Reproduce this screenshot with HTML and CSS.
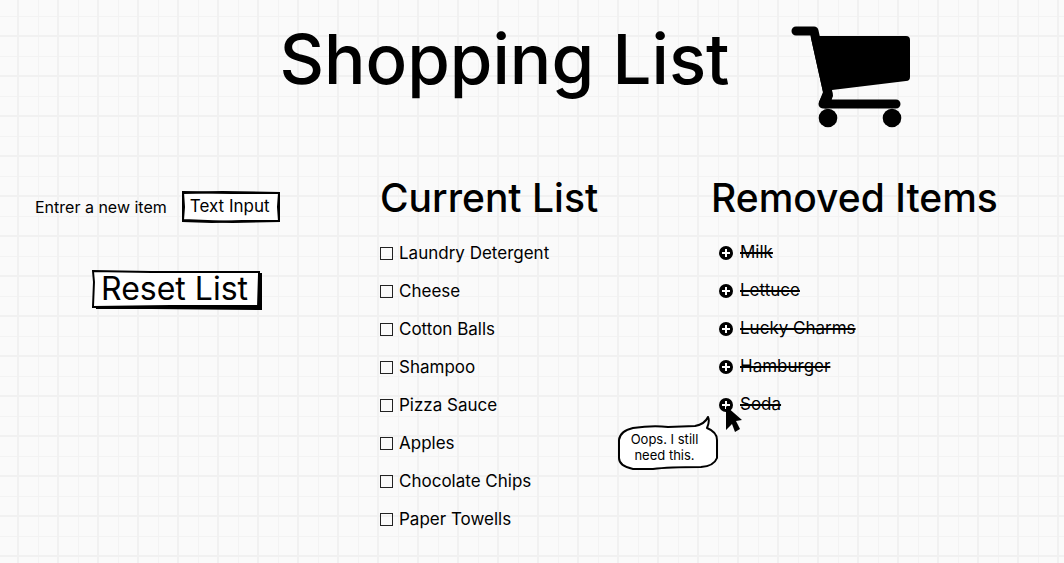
FILE: index.html
```html
<!DOCTYPE html>
<html lang="en">
<head>
<meta charset="utf-8">
<meta name="viewport" content="width=device-width, initial-scale=1">
<title>Shopping List</title>
<link rel="stylesheet" href="styles.css">
</head>
<body>
<svg class="defs" aria-hidden="true">
  <symbol id="plus" viewBox="0 0 14 14">
    <circle cx="7" cy="7" r="7" fill="#000"/>
    <path d="M7 3V11M3 7H11" stroke="#fff" stroke-width="2"/>
  </symbol>
</svg>
<header class="header">
  <h1 class="title">Shopping List</h1>
  <svg class="cart" viewBox="0 0 120 102" aria-hidden="true">
    <path d="M5 5H23L37 68L35 78" fill="none" stroke="#000" stroke-width="9" stroke-linecap="round" stroke-linejoin="round"/>
    <path d="M26 10H115Q119 10 119 14V51Q119 55 115 55L41 64L42 70L38 80L28 76L32 66L20 12Z"/>
    <path d="M35 72L32 78H105" fill="none" stroke="#000" stroke-width="9" stroke-linecap="round" stroke-linejoin="round"/>
    <circle cx="37" cy="92" r="9.3"/>
    <circle cx="101" cy="92" r="9.3"/>
  </svg>
</header>
<main class="columns">
  <section class="controls">
    <div class="field">
      <label class="label" for="item">Entrer a new item</label>
      <span class="sketch input-box">
        <svg class="outline" viewBox="0 0 98 32" preserveAspectRatio="none" aria-hidden="true">
          <path d="M1 1L50 2L97 2L96 16L97 30L50 31L1 29L2 16Z" fill="#fff" stroke="#000" stroke-width="2"/>
          <path d="M1 2L40 1L97 2L97 30L60 30L30 31L1 30L1 16Z" fill="none" stroke="#000" stroke-width="2"/>
        </svg>
        <input class="input" id="item" type="text" value="Text Input">
      </span>
    </div>
    <button class="sketch reset" type="button">
      <svg class="outline" viewBox="0 0 172 40" preserveAspectRatio="none" aria-hidden="true">
        <path d="M4 34H167V3H172V40L60 39H4Z"/>
        <path d="M1 1L60 2L169 2L168 36L80 36L1 37L2 12Z" fill="#fff" stroke="#000" stroke-width="2"/>
      </svg>
      <span class="reset-text">Reset List</span>
    </button>
  </section>
  <section>
    <h2 class="heading">Current List</h2>
    <ul class="list">
      <li class="row"><label class="item"><input class="check" type="checkbox">Laundry Detergent</label></li>
      <li class="row"><label class="item"><input class="check" type="checkbox">Cheese</label></li>
      <li class="row"><label class="item"><input class="check" type="checkbox">Cotton Balls</label></li>
      <li class="row"><label class="item"><input class="check" type="checkbox">Shampoo</label></li>
      <li class="row"><label class="item"><input class="check" type="checkbox">Pizza Sauce</label></li>
      <li class="row"><label class="item"><input class="check" type="checkbox">Apples</label></li>
      <li class="row"><label class="item"><input class="check" type="checkbox">Chocolate Chips</label></li>
      <li class="row"><label class="item"><input class="check" type="checkbox">Paper Towells</label></li>
    </ul>
  </section>
  <section>
    <h2 class="heading">Removed Items</h2>
    <ul class="list removed">
      <li class="row"><button class="restore" type="button" aria-label="Restore Milk"><svg class="plus"><use href="#plus"/></svg></button><s class="gone">Milk</s></li>
      <li class="row"><button class="restore" type="button" aria-label="Restore Lettuce"><svg class="plus"><use href="#plus"/></svg></button><s class="gone">Lettuce</s></li>
      <li class="row"><button class="restore" type="button" aria-label="Restore Lucky Charms"><svg class="plus"><use href="#plus"/></svg></button><s class="gone">Lucky Charms</s></li>
      <li class="row"><button class="restore" type="button" aria-label="Restore Hamburger"><svg class="plus"><use href="#plus"/></svg></button><s class="gone">Hamburger</s></li>
      <li class="row">
        <button class="restore" type="button" aria-label="Restore Soda"><svg class="plus"><use href="#plus"/></svg></button><s class="gone">Soda</s>
        <div class="bubble">
          <svg class="outline" viewBox="0 0 100 54" aria-hidden="true">
            <path d="M15 12Q35 9 50 11L77 10Q87 8 90 1Q92 5 89 12Q99 16 99 24V42Q96 50 83 51Q50 51 35 53H15Q1 50 1 42V24Q2 15 15 12Z" fill="#fff" stroke="#000" stroke-width="2" stroke-linejoin="round"/>
          </svg>
          <span class="bubble-text">Oops. I still<br>need this.</span>
        </div>
        <svg class="cursor" viewBox="0 0 16 26" aria-hidden="true"><path d="M0 0L16 14L10 15L14 23L9 26L6 18L0 24Z"/></svg>
      </li>
    </ul>
  </section>
</main>
</body>
</html>
```
FILE: styles.css
```css
* { box-sizing: border-box; }

body {
  margin: 0;
  color: #000;
  font-family: Inter, "Liberation Sans", sans-serif;
  font-size: 17px;
  background-color: #fafafa;
  background-image:
    linear-gradient(90deg, #f1f1f1 2px, transparent 2px),
    linear-gradient(#f1f1f1 2px, transparent 2px),
    linear-gradient(90deg, #f3f3f3 1px, transparent 1px),
    linear-gradient(#f3f3f3 1px, transparent 1px);
  background-size: 40px 40px;
  background-position: 17px 0, 0 35px, 38px 0, 0 16px;
}

.defs { position: absolute; width: 0; height: 0; }

.header {
  display: flex;
  justify-content: center;
  align-items: flex-start;
  gap: 61px;
  padding: 26px 0 0 126px;
}

.title {
  margin: 0;
  font-size: 69px;
  line-height: 66px;
  font-weight: 500;
  white-space: nowrap;
}

.cart { width: 120px; height: 102px; flex: none; }

.columns {
  display: grid;
  grid-template-columns: 345fr 331fr 317fr;
  padding: 48px 36px 0 35px;
}

.controls {
  display: flex;
  flex-direction: column;
  align-items: flex-start;
  gap: 47px;
  padding-top: 15px;
}

.field { display: flex; align-items: center; gap: 15px; }
.label { font-size: 16px; white-space: nowrap; }

.sketch { position: relative; isolation: isolate; }

.outline {
  position: absolute;
  inset: 0;
  z-index: -1;
  width: 100%;
  height: 100%;
}

.input-box { width: 98px; height: 32px; }

.input {
  width: 100%;
  height: 100%;
  padding: 0 0 2px 8px;
  border: 0;
  background: none;
  color: inherit;
  font: inherit;
}

.reset {
  margin-left: 57px;
  padding: 0 14px 2px 9px;
  border: 0;
  background: none;
  color: inherit;
  font-family: inherit;
  font-size: 32px;
  line-height: 38px;
  white-space: nowrap;
}

.heading {
  margin: 0;
  font-size: 39px;
  line-height: 44px;
  font-weight: 500;
  white-space: nowrap;
}

.list { margin: 14px 0 0; padding: 0; list-style: none; }

.row {
  position: relative;
  display: flex;
  align-items: center;
  height: 38px;
}

.item { display: flex; align-items: center; gap: 6px; }

.check {
  appearance: none;
  width: 13px;
  height: 13px;
  margin: 0;
  border: 1px solid #222;
}

.removed { padding-left: 8px; }

.restore {
  display: flex;
  padding: 0;
  border: 0;
  background: none;
}

.plus { width: 14px; height: 14px; }

.gone {
  margin-left: 7px;
  padding-bottom: 2px;
  text-decoration-thickness: 2px;
}

.bubble {
  position: absolute;
  left: -101px;
  top: 30px;
  z-index: 1;
  width: 100px;
  height: 54px;
  padding: 15px 7px 0 0;
  text-align: center;
  font-size: 13px;
  line-height: 16px;
  isolation: isolate;
}

.cursor {
  position: absolute;
  left: 7px;
  top: 20px;
  width: 16px;
  height: 26px;
}
```
